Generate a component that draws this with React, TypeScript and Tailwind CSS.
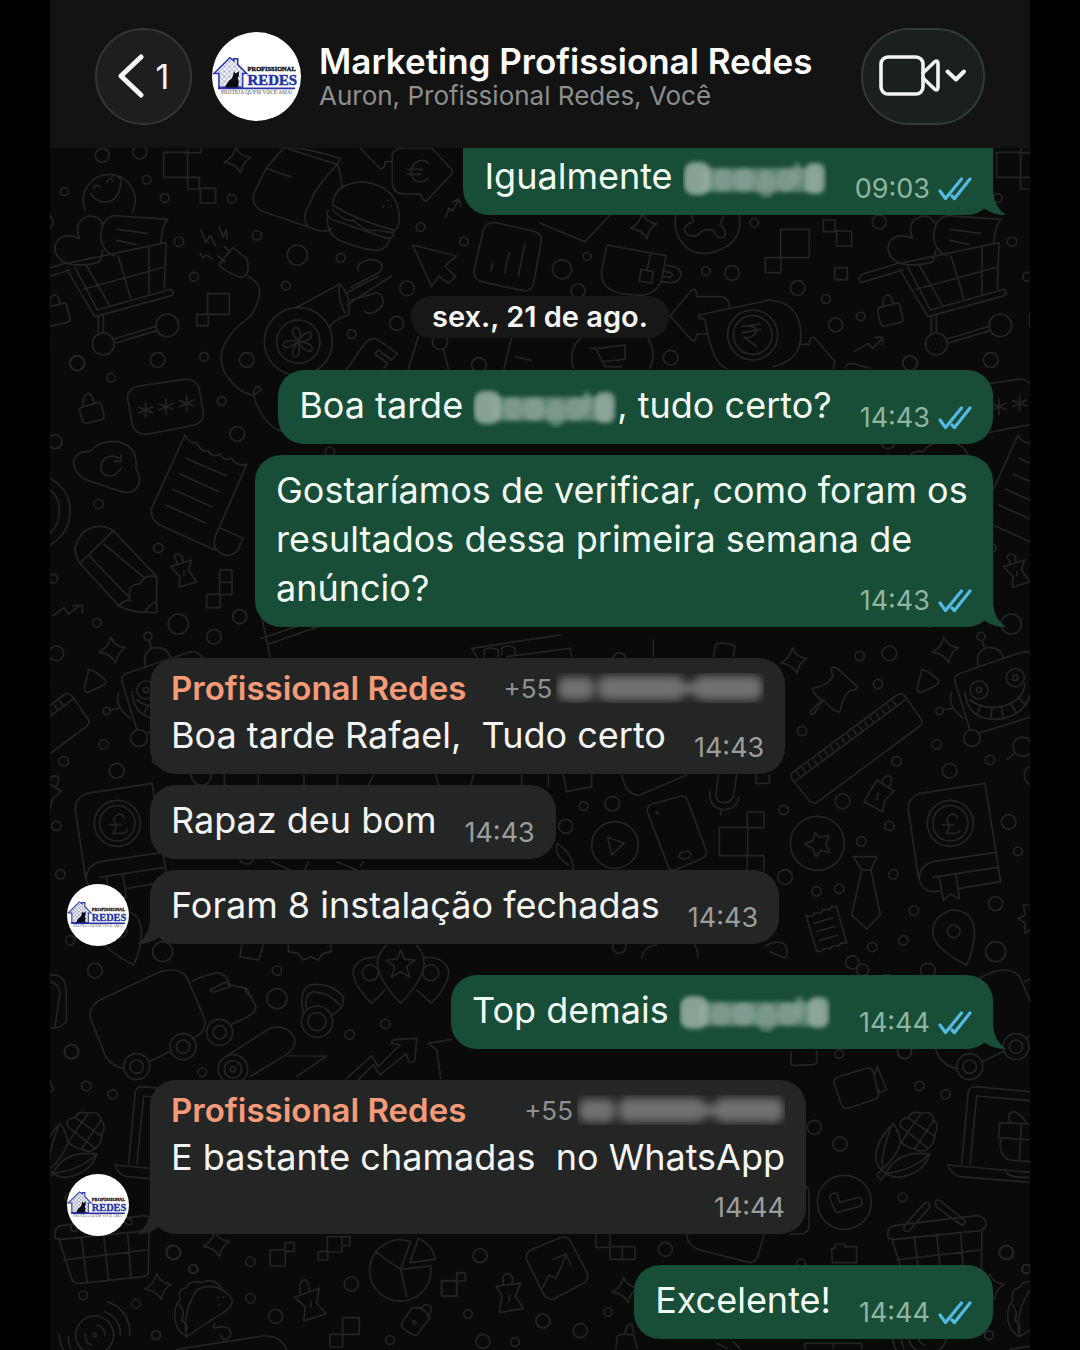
import type { ReactNode } from "react";

type Circle = [number, number, number];

type Message = {
  id: number;
  own?: boolean;
  sender?: boolean;
  body: ReactNode;
  time: string;
  timePlace?: "inline" | "below" | "corner";
  tail?: boolean;
  cut?: boolean;
  gap: string;
};

// Each doodle zone is drawn on its own 3x grid and placed on the wallpaper.
const zones: { at: string; circles: Circle[]; sparkles: [number, number][]; path: string }[] = [
  {
    at: "translate(50 130) scale(.3333)",
    circles: [
      [157, 76, 21], [269, 66, 21], [290, 149, 13], [43, 185, 12], [344, 204, 13], [545, 206, 13], [387, 335, 14],
      [621, 316, 14], [742, 375, 30], [872, 383, 13], [432, 440, 13], [708, 467, 13], [1071, 475, 22], [1040, 580, 21],
      [905, 612, 13], [1112, 291, 13], [1242, 335, 13], [82, 700, 22], [323, 690, 22], [183, 743, 13], [462, 680, 13],
      [590, 690, 22], [515, 813, 13], [562, 912, 22], [15, 935, 21], [160, 642, 33], [352, 586, 34], [745, 635, 102],
      [745, 635, 65], [1170, 635, 23], [1287, 705, 22],
    ],
    sparkles: [[563, 90]],
    path: "M341 67h72v75h-72zM413 53v15h40v-15M413 142h35v35h-35zM451 175h46v44h-46zM105 240A78 78 0 1 1 248 245M122 190Q140 222 180 214Q215 200 212 140M130 178q8-22 20-5M170 158q8-22 20-5M185 140q10-12 28 8M55 402Q5 380 18 340Q35 305 88 325Q68 270 120 258Q150 258 158 285M158 362L150 395Q110 410 55 402M192 257L353 268Q335 290 333 338M192 257Q155 265 152 320Q155 365 195 378M200 298l93 12M200 331l58 12M45 400L-60 432Q-80 445-66 458L60 420M50 400L348 338L343 475M50 418L135 560L365 497Q375 485 362 478L142 540L75 412M110 408L178 525M205 380L242 505M297 352V490M100 478L340 412M145 560V608M160 555V607M190 628L320 588M194 640L322 602M-10 532L40 520Q48 518 50 526L60 565Q62 575 52 577L5 588Q-5 588-8 580L-16 545Q-16 535-10 532zM0 528v-18Q5 495 15 495Q26 498 30 520M95 832L145 818Q152 816 154 824L162 858Q162 866 154 869L108 880Q100 880 98 872L88 842Q88 834 95 832zM100 830v-22Q106 790 115 790Q128 792 132 820M232 800Q235 775 265 768L405 748Q438 745 447 775L460 845Q463 875 435 885L295 912Q255 915 247 885zM287 818v44M266 832l42 16M308 830l-42 20M348 808v44M327 822l42 16M369 820l-42 20M410 798v44M389 812l42 16M431 810l-42 20M700 55L648 115L612 190Q602 225 635 243L800 300Q830 308 845 295M648 115l72 25M700 55Q740 45 870 85L862 103L715 57M862 103Q876 140 876 175M862 103Q790 180 785 210Q750 265 775 290M848 225Q850 160 940 155Q1050 170 1048 270Q1045 300 1030 300Q930 275 848 225zM835 240Q825 260 850 270L1010 325Q1035 325 1030 305M848 240Q890 280 910 270Q950 310 975 300L1030 308M832 262Q830 320 880 335Q960 365 990 360Q1015 350 1020 325M998 230h3M1012 211h3M1022 228h3M1027 95V75Q1032 55 1060 54H1145L1205 118Q1210 125 1205 132L1130 212Q1118 215 1112 192H1060Q1030 190 1027 160V95H1005Q1005 118 990 116L930 53M1135 100Q1125 88 1110 92Q1085 100 1083 125Q1085 155 1110 155Q1125 155 1135 145M1073 118h45M1073 133h40M1187 262l10-27 10 8 18-32M1207 217l20-10 6 22M507 405L548 353L590 385Q605 440 570 442Q525 425 507 405zM505 378l20 18M523 350l18 18M595 440Q660 470 600 560Q490 640 520 720Q560 790 610 795Q650 775 620 770Q595 790 640 860Q670 900 700 905M453 300l15 38 12-22 17 32M508 292l12 30 8-24 4 30M450 370l10 14 8-10 18 12M473 491h65v62h-65zM440 553h35v34h-35zM1088 345L1220 378L1185 408L1217 440L1195 460L1167 438L1145 470zM1300 300Q1308 275 1335 278L1450 303Q1480 310 1473 340L1450 465Q1442 485 1420 482L1295 455Q1268 445 1273 420zM1328 400l-5 22M1377 368l-13 60M1425 340l-20 98M735 535L870 462M840 590Q850 570 895 555Q905 500 870 462Q860 500 885 550M888 490L985 438M890 525L1025 438M925 422Q915 395 965 388Q1010 395 990 425L905 472M905 510L980 488Q1005 495 997 525Q975 560 943 545M745 635Q715 600 738 592Q760 600 745 635Q770 595 785 612Q785 635 745 635Q795 640 785 662Q765 670 745 635Q755 680 735 680Q715 670 745 635Q705 665 700 645Q705 625 745 635M890 718L945 640Q965 618 985 630L1042 670L1025 690L985 660L975 672L1012 700L1002 715M1105 620L1075 718M1180 655l15 62M1385 620L1362 718M1395 680l50 12",
  },
  {
    at: "translate(540 200) scale(.3333)",
    circles: [
      [66, 208, 29], [141, 169, 12], [114, 273, 21], [498, 213, 13], [576, 219, 22], [643, 68, 13], [773, 264, 22],
      [858, 297, 13], [887, 375, 21], [962, 349, 13], [1018, 66, 21], [392, 473, 22], [1110, 489, 22], [638, 405, 75],
      [638, 405, 58],
    ],
    sparkles: [[312, 78]],
    path: "M722 88h86v85h-86zM676 173h47v45h-47zM850 60h36v35h-36zM890 93h45v45h-45zM884 203h38v36h-38zM0 70L135 125L210 45M408 45Q395 110 450 150Q490 170 540 150Q610 120 598 45M455 45L460 65Q430 75 435 95Q445 115 475 105Q485 85 520 90Q530 120 555 110Q560 85 540 75L550 50M200 135L378 167L365 240Q345 290 290 285Q180 285 185 215zM332 160L322 208M303 208L340 215L335 250L298 243zM375 195L400 200Q425 205 422 228Q415 255 368 245M372 213L392 218Q405 225 390 232L370 230M390 348L455 270Q470 262 470 290H545Q568 295 568 322M390 348L455 420Q468 428 470 402H500M477 345Q472 355 495 358Q515 490 560 505M477 345L690 300Q780 310 783 400Q785 480 700 500M780 433H808Q810 405 825 415L885 485L880 505M605 380l55-8M607 398l55-10M625 378Q655 380 648 400Q635 415 612 412L650 440M100 505Q85 450 120 415M325 415Q350 460 330 505M148 445H168L195 500H245M175 445L255 435V478L185 485M943 455L985 430L998 445L1025 418M1005 412H1028V435M915 505Q920 485 945 492L990 505",
  },
  {
    at: "translate(50 430) scale(.3333)",
    circles: [[146, 222, 14], [325, 354, 14], [385, 582, 30], [492, 620, 22], [569, 560, 21], [141, 578, 13], [10, 446, 13], [840, 65, 14]],
    sparkles: [],
    path: "M0 145Q60 180 60 240Q60 310 0 345M0 180Q28 200 28 240Q28 285 0 310M100 145Q65 120 72 90Q85 60 120 65Q145 30 205 35Q265 50 258 115Q280 155 255 180Q235 195 200 180Q120 155 100 145zM212 88Q190 70 165 85Q140 115 165 135Q195 145 213 115M212 76v18h-18M405 15L305 235Q300 270 330 285L495 360M405 15Q415 40 440 38Q455 70 475 62Q485 85 510 72Q520 95 545 85Q560 110 590 103L500 310Q485 340 500 360Q530 390 560 365L580 325L512 295M408 85l120 52M390 132l117 53M368 178l118 52M347 225l118 53M75 355Q85 310 120 295Q160 280 190 302L320 440V548L260 545Q225 540 205 525L90 400Q75 380 75 355zM90 400L190 302M120 380L235 500M162 342L285 445M205 530Q225 505 240 512Q230 460 270 462Q285 430 318 440M285 545Q300 520 318 518M362 410L395 400L425 390L415 420L440 455L388 472L390 440zM380 400V392Q365 380 380 372Q402 372 398 398M402 425v12M509 420h37v37h-37zM509 457h37v37h-37zM470 493h40v40h-40zM10 557L42 533L55 552L90 527M70 527H97V550M635 560L660 680M635 625L770 580M655 643L890 560",
  },
  {
    at: "translate(770 620) scale(.3333)",
    circles: [
      [269, 108, 14], [358, 100, 22], [324, 192, 14], [96, 333, 14], [380, 424, 14], [500, 373, 14], [539, 452, 22],
      [660, 420, 14], [41, 570, 14], [218, 544, 22], [358, 618, 14], [274, 664, 14], [716, 606, 22], [744, 694, 13],
      [45, 771, 22], [370, 763, 14], [139, 814, 14], [208, 806, 14], [432, 872, 14], [677, 851, 21], [400, 961, 14],
      [307, 981, 14], [677, 995, 30], [474, 1052, 22], [606, 354, 25], [758, 380, 29], [633, 49, 12], [509, 273, 11],
      [627, 210, 27], [627, 210, 8], [736, 173, 27], [736, 173, 8], [142, 670, 81], [541, 610, 69], [541, 610, 53],
      [551, 934, 19], [247, 1027, 20], [278, 1050, 18],
    ],
    sparkles: [[72, 122], [527, 90]],
    path: "M183 145Q195 138 205 148L262 200Q258 212 240 212Q218 230 210 275Q195 280 160 240L130 283Q115 285 125 270L155 240Q130 225 128 205Q170 200 188 170zM455 150Q470 148 505 180Q510 190 500 195L455 217Q440 217 442 205zM62 462L385 222Q395 218 405 228L455 300Q458 310 450 318L140 548Q128 553 118 543L65 475zM78 482L408 238M80 455l8 12M97 443l8 12M114 430l8 12M131 418l8 12M148 405l8 12M165 393l8 12M182 380l8 12M199 368l8 12M216 355l8 12M233 343l8 12M250 330l8 12M267 318l8 12M284 305l8 12M301 293l8 12M318 280l8 12M335 268l8 12M352 255l8 12M369 243l8 12M625 137Q615 95 650 83Q695 80 700 115M643 83L636 60M555 185Q550 170 570 160L760 95Q790 95 800 120L850 270M555 185L600 330M632 338L800 285M545 218Q530 260 580 295M545 265L520 270M585 215Q590 300 680 298Q780 290 790 180M600 240Q630 265 680 262Q760 250 765 190M622 280l12-26M662 296l4-32M700 296l-6-34M740 280l-16-28M768 255l-22-22M735 397L712 418M282 545L320 480L372 513L345 540L338 575zM335 485Q345 462 362 470Q370 485 355 503M325 520l-5 18M135 637L150 652L178 645L168 672L178 697L152 692L138 710L128 685L103 672L128 662zM250 710H321L303 750H275zM275 750L245 885L290 927L331 885L303 750M108 887l18 2 8-10 18 0 8-10 18 0 8-10 14 1L230 970l-16-2-8 10-18 0-8 8-18 0-8 8-14 0zM132 910l55-16M140 935l55-16M148 962l55-16M645 490L450 520Q412 535 415 570L445 770Q455 815 490 815L510 813M645 490L692 785L568 805M448 775Q450 735 490 725L678 697M488 772L683 742M508 770L520 842L540 822L568 835L558 765M562 595Q558 580 545 583Q525 590 535 610Q540 630 528 640H550Q565 642 570 630M518 614h35M490 950Q480 890 545 870Q610 870 614 935Q612 990 590 1035Q500 990 490 950zM780 855h-20l5 30-20 10 20 15v30l15-10",
  },
  {
    at: "translate(50 760) scale(.3333)",
    circles: [
      [65, 875, 21], [681, 632, 14], [681, 716, 30], [899, 824, 14], [1006, 792, 14], [457, 937, 13], [454, 46, 30],
      [590, 290, 22], [260, 920, 39], [260, 920, 20], [399, 860, 39], [399, 860, 20], [509, 817, 39], [509, 817, 20],
      [961, 638, 24], [1142, 638, 24], [801, 785, 47], [801, 785, 27], [549, 928, 44], [549, 928, 26], [549, 928, 8],
    ],
    sparkles: [],
    path: "M120 770Q118 745 145 722L330 635Q385 620 410 650L465 780Q470 815 430 835M120 770L165 885Q185 920 220 925M298 905L365 872M425 665Q450 650 500 638Q530 640 540 675L590 685L618 740Q620 765 545 792M480 690L530 665L540 680L490 697zM585 688Q590 708 605 708M0 645Q45 640 48 690L50 780Q40 805 0 805M0 665Q25 670 30 700L15 800M965 730Q905 670 910 630Q925 590 980 592M1052 730Q985 660 982 610Q985 575 1010 556M1052 730Q1120 660 1123 610Q1120 575 1100 556M1145 730Q1200 670 1196 630Q1180 590 1125 592M1145 730L1100 690M965 730L1005 690M1052 570L1063 598L1096 600L1070 620L1080 652L1052 635L1025 652L1034 620L1008 600L1041 598zM760 760Q745 690 780 675Q840 665 880 710Q885 745 845 765M770 745Q760 705 790 695Q840 700 870 735M530 888L660 805Q710 790 735 835Q740 865 700 890L600 950M712 888H830L740 950M523 45V76M625 45V76M762 45V76M862 45V76M970 45L955 76M1158 45l8 31M890 955L965 888L985 920L1050 855L1025 850Q1025 838 1040 838L1100 835L1095 900Q1075 920 1070 880L990 945L970 915L925 958M1135 850L1205 838M1135 850L1160 870L1172 955M575 555L570 590L625 600L640 555M715 555V575L745 580L760 600L780 590L805 600L820 580L843 575V555M665 305l55 25M775 305l-10 25M860 305l60 25M930 320l10-15",
  },
  {
    at: "translate(50 1060) scale(.3333)",
    circles: [
      [109, 78, 14], [188, 103, 14], [371, 578, 21], [431, 627, 13], [601, 605, 14], [601, 715, 14], [677, 769, 21],
      [904, 672, 21], [1020, 840, 13], [99, 706, 13], [258, 731, 13], [318, 826, 13], [134, 825, 57], [134, 825, 5],
      [1093, 787, 5],
    ],
    sparkles: [[500, 552], [325, 680]],
    path: "M172 725Q240 750 240 825M165 755Q210 775 212 825M28 823Q28 850 40 870M55 830Q55 850 62 865M105 820Q105 850 125 855M140 795Q165 800 165 825M660 570h46v48h-46zM705 548h28v26h-28zM832 530h44v46h-44zM805 574h28v26h-28zM876 530h24v26h-24zM878 773h50v50h-50zM840 823h38v38h-38zM1175 662h46v46h-46zM410 830Q395 760 440 690Q500 660 545 715Q555 740 500 770zM410 830Q380 815 375 780Q370 740 390 720Q380 690 410 682Q420 658 455 668Q490 650 515 685M388 735Q408 760 395 780Q415 795 410 812M503 713h3M518 712h3M508 733h3M495 790Q480 810 510 800Q550 800 540 830Q520 850 512 825M735 712L808 685L800 730L828 762L762 782L765 740zM750 700V675Q755 655 770 662Q780 675 778 692M783 725v16M1082 545A92 92 0 1 0 1142 618L1052 628zM1052 628L975 575M1052 628L1070 710M1105 535L1080 608L1155 598Q1150 555 1105 535zM1055 790L1085 745Q1120 735 1140 775L1100 825Q1085 830 1055 800zM1115 745Q1125 725 1143 740Q1145 760 1130 770M380 868L640 828Q690 825 710 868",
  },
  {
    at: "translate(440 1180) scale(.3333)",
    circles: [
      [120, 227, 21], [676, 208, 21], [309, 423, 21], [421, 452, 21], [129, 484, 21], [84, 402, 13], [225, 486, 13],
      [504, 396, 13], [1388, 52, 13], [1698, 217, 21], [1083, 250, 13], [1758, 267, 13], [1647, 465, 13],
    ],
    sparkles: [[556, 330]],
    path: "M260 240Q255 220 272 210L365 172Q382 168 392 185L442 280Q448 298 430 310L345 355Q325 362 312 345zM307 325L327 285L348 295L378 225M340 238L378 222L393 255M468 165V202H510V238H585V200H510V165M547 200V238M5 303H50V348H5zM50 278H76V303H50zM169 318L242 310L226 350L250 385L178 398L186 350zM190 312V290Q203 270 217 290V310M208 345v20M740 165Q745 200 780 210L930 248Q948 245 953 230L972 165M1175 205H1185V192H1213V200H1250V248H1177zM528 505L532 470Q540 458 580 465L592 505M555 458Q560 430 575 432L582 460M1095 505V490H1265V505M1180 490V505M830 490L860 505M880 485L900 505",
  },
  {
    at: "translate(440 640) scale(.3333)",
    circles: [[431, 498, 13], [517, 491, 22], [377, 559, 21], [538, 58, 20], [525, 615, 70], [651, 518, 3], [538, 920, 20]],
    sparkles: [],
    path: "M503 592L552 610L515 645zM622 515Q620 500 635 492L725 468Q738 468 742 480L798 630Q802 648 788 655L705 690Q690 692 685 680zM717 650Q720 632 745 634Q760 642 745 654Q725 662 717 650M835 405L828 465Q830 490 855 488Q880 485 882 460L890 405M810 453Q805 505 850 508Q890 510 897 470M843 510v15M838 562h85v85h-85zM922 516h50v47h-50zM922 647h50v45M922 647v45M948 405v25h40v-25M370 405L380 455L455 440V405M545 405Q560 470 600 465L740 405M245 405V437M325 405V440M100 405L92 437M350 610Q400 640 400 690M350 615Q345 650 385 675M95 25L110 50M200 50L390 25L395 50M95 25L360-15M640 0V50M820 50L828 12Q850 5 885 18L880 50M605 955Q615 915 650 915M765 915Q775 935 775 955M975 920Q1000 900 1030 910Q1050 930 1035 955L990 935M133 50V30Q150 18 175 30V50M185 45V25Q205 10 225 25V45",
  },
  {
    at: "translate(780 960) scale(.3333)",
    circles: [[103, 502, 21], [180, 552, 21], [178, 282, 13], [373, 275, 21], [193, 727, 81]],
    sparkles: [],
    path: "M162 370Q160 358 172 352L260 325Q275 322 280 335L295 400Q297 412 285 418L205 445Q190 447 185 435zM285 340L292 320L320 390L300 398L292 385M340 490Q290 540 287 590Q290 620 305 630Q350 590 362 550Q360 520 340 490zM335 495Q300 590 308 625M318 640Q350 570 450 582Q430 640 360 652Q330 652 318 640L302 660L290 645L305 630zM320 640Q400 630 445 585M362 500Q355 475 385 473Q395 450 425 460Q455 450 462 480Q480 500 465 520Q465 550 445 565Q430 580 405 568Q375 560 362 545M362 500L445 565M385 473L465 530M425 460L395 500L365 545M462 480L405 565M150 715Q145 705 160 700L170 700L180 728L235 712Q245 712 246 728Q245 738 235 740L175 757Q165 757 162 745zM545 610L565 395Q570 380 585 380L750 395M570 612L590 408L750 422M503 615L750 637M503 615Q515 645 540 650L750 667M678 635Q685 650 720 652L750 652M660 488L750 492M660 488L655 533L750 540M662 535Q655 590 690 600L750 605M725 490L718 600M690 485Q680 455 705 455Q725 465 740 490M325 835Q318 805 340 797L590 767Q620 770 618 795Q615 808 600 812L345 838Q330 838 325 835zM335 835L375 960Q385 975 400 970L590 950Q605 948 604 935L606 812M403 830L420 965M470 825L485 960M542 818L552 955M350 900L600 870M375 795Q365 815 385 815L450 740Q450 725 435 728zM470 720Q460 735 475 745L545 795Q560 795 553 780L480 722zM33 275V310Q35 318 45 316L100 314Q112 312 110 300V275M65 675Q85 675 87 695V800Q85 822 60 822H30",
  },
];

const Wallpaper = () => (
  <svg
    aria-hidden="true"
    className="absolute inset-0 h-full w-full text-[#232424]"
    viewBox="50 148 980 1202"
    preserveAspectRatio="xMidYMin slice"
    fill="none"
    stroke="currentColor"
    strokeWidth="5"
    strokeLinejoin="round"
    strokeLinecap="round"
  >
    <defs>
      <g id="doodles">
        {zones.map((zone) => (
          <g key={zone.at} transform={zone.at}>
            {zone.circles.map(([cx, cy, r]) => (
              <circle key={`${cx}-${cy}-${r}`} cx={cx} cy={cy} r={r} />
            ))}
            {zone.sparkles.map(([x, y]) => (
              <path
                key={`${x}-${y}`}
                transform={`translate(${x} ${y})`}
                d="M-5-38Q6-10 39-7Q14 6 9 38Q-6 10-40 7Q-14-6-5-38z"
              />
            ))}
            <path d={zone.path} />
          </g>
        ))}
      </g>
    </defs>
    {/* the pattern repeats every 833 units */}
    <use href="#doodles" x="-833" />
    <use href="#doodles" />
    <use href="#doodles" x="833" />
  </svg>
);

const Logo = ({ className }: { className: string }) => (
  <svg viewBox="0 0 90 90" className={`shrink-0 rounded-full bg-white ${className}`} role="img" aria-label="Profissional Redes">
    <defs>
      <pattern id="net" width="5" height="5" patternUnits="userSpaceOnUse">
        <path d="M0 2.5L2.5 0L5 2.5L2.5 5z" fill="none" stroke="#5b669c" strokeWidth=".7" />
      </pattern>
    </defs>
    <path d="M2 42L18 26L22 29V27H26V33L35 42H31V56H7V42z" fill="url(#net)" stroke="#2b3aa8" strokeWidth="1.6" />
    <path d="M13 57Q15 50 20 47Q22 43 22 40L24 42L27 40Q28 44 26 46Q28 51 26 57z" fill="#0b0b12" />
    <path d="M6 57H84" stroke="#2432a5" strokeWidth="2" />
    <text x="36" y="39" fontFamily="Liberation Serif, serif" fontWeight="700" fontSize="6.5" fill="#15151c" stroke="#15151c" strokeWidth=".4">
      PROFISSIONAL
    </text>
    <text x="36" y="54" fontFamily="Liberation Serif, serif" fontWeight="700" fontSize="15" fill="#2432a5" stroke="#2432a5" strokeWidth=".5">
      REDES
    </text>
    <text x="9" y="63" fontFamily="Liberation Serif, serif" fontSize="5.5" fill="#55565e">
      PROTEJA QUEM VOCÊ AMA!
    </text>
  </svg>
);

// Smudged-out name
const HiddenName = ({ wide }: { wide?: boolean }) => (
  <svg
    aria-hidden="true"
    viewBox="0 0 144 40"
    preserveAspectRatio="none"
    className={`inline-block h-10 align-middle ${wide ? "w-[152px]" : "w-36"}`}
  >
    <g className="blur-[2px]" fill="#93aca0">
      <rect x="1" y="3" width="27" height="33" rx="10" opacity=".9" />
      <rect x="18" y="9" width="120" height="24" rx="8" opacity=".6" />
      <ellipse cx="40" cy="21" rx="10" ry="12" opacity=".5" />
      <ellipse cx="61" cy="21" rx="11" ry="12" opacity=".6" />
      <ellipse cx="83" cy="25" rx="10" ry="14" opacity=".5" />
      <ellipse cx="103" cy="21" rx="10" ry="12" opacity=".5" />
      <ellipse cx="114" cy="15" rx="5" ry="12" opacity=".5" />
      <rect x="122" y="4" width="20" height="31" rx="8" opacity=".85" />
    </g>
  </svg>
);

const HiddenPhone = () => (
  <svg aria-hidden="true" viewBox="0 0 208 30" className="h-[30px] w-52">
    <g className="blur-[4px]" fill="#6f7070">
      <rect x="2" y="4" width="36" height="23" rx="8" />
      <rect x="42" y="3" width="86" height="24" rx="8" />
      <rect x="120" y="10" width="24" height="11" rx="4" />
      <rect x="138" y="3" width="68" height="24" rx="8" />
    </g>
  </svg>
);

const Checks = () => (
  <svg aria-label="Lida" role="img" viewBox="0 0 34 24" className="h-6 w-[34px]" fill="none" stroke="#56b9e4" strokeWidth="3.200" strokeLinecap="round" strokeLinejoin="round">
    <path d="M2 14L7.500 21.500L23.500 2M14 19L16.500 21.500L32 2" />
  </svg>
);

const Tail = ({ own }: { own?: boolean }) =>
  own ? (
    <svg aria-hidden="true" viewBox="0 0 34 30" className="absolute -right-[13px] bottom-0 h-[30px] w-[34px]">
      <path d="M21 0V6Q22 22 34 30Q22 30 13 24L0 10z" fill="#184d37" />
    </svg>
  ) : (
    <svg aria-hidden="true" viewBox="0 0 34 30" className="absolute -left-[13px] bottom-0 h-[30px] w-[34px]">
      <path d="M13 0V6Q12 22 0 30Q12 30 21 24L34 10z" fill="#242626" />
    </svg>
  );

const messages: Message[] = [
  { id: 2, own: true, body: <>Boa tarde <HiddenName />, tudo certo?</>, time: "14:43", gap: "mt-8" },
  {
    id: 3,
    own: true,
    body: "Gostaríamos de verificar, como foram os resultados dessa primeira semana de anúncio?",
    time: "14:43",
    timePlace: "corner",
    tail: true,
    gap: "mt-[11px]",
  },
  { id: 4, sender: true, body: "Boa tarde Rafael,  Tudo certo", time: "14:43", gap: "mt-[31px]" },
  { id: 5, body: "Rapaz deu bom", time: "14:43", gap: "mt-[11px]" },
  { id: 6, body: "Foram 8 instalação fechadas", time: "14:43", tail: true, gap: "mt-[11px]" },
  { id: 7, own: true, body: <>Top demais <HiddenName wide /></>, time: "14:44", tail: true, gap: "mt-[31px]" },
  { id: 8, sender: true, body: "E bastante chamadas  no WhatsApp", time: "14:44", timePlace: "below", tail: true, gap: "mt-[31px]" },
  { id: 9, own: true, body: "Excelente!", time: "14:44", gap: "mt-[31px]" },
];

const placement = {
  inline: { row: "flex items-end justify-between gap-[28px]", time: "-mb-1" },
  below: { row: "flex flex-col", time: "mt-[10px] -mb-1 self-end" },
  corner: { row: "", time: "float-right mt-[21px] -mb-1" },
};

const Bubble = ({ own, sender, body, time, timePlace = "inline", tail, cut, gap }: Message) => {
  const place = placement[timePlace];
  const stamp = (
    <span
      className={`flex shrink-0 items-center gap-2 text-[27px] leading-8 ${place.time} ${own ? "text-[#8fb5a2]" : "text-[#9c9d9d]"}`}
    >
      <time>{time}</time>
      {own && <Checks />}
    </span>
  );

  return (
    <li className={`flex items-end ${gap} ${own ? "justify-end pr-[37px]" : "gap-[21px] pl-[17px]"}`}>
      {!own && <div className="-mb-0.5 w-[62px] shrink-0">{tail && <Logo className="h-[62px] w-[62px]" />}</div>}
      <div
        className={`relative max-w-[738px] px-[21px] pb-[14px] ${own ? "bg-[#184d37] text-[#f1faf4]" : "bg-[#242626] text-[#f4f4f4]"} ${
          cut ? "rounded-b-[26px] pt-1" : "rounded-[26px] pt-[11px]"
        }`}
      >
        {tail && <Tail own={own} />}
        {sender && (
          <div className="flex h-[42px] items-center justify-between gap-8 pb-1">
            <span className="text-[33px] leading-[38px] font-semibold text-[#f59b79]">Profissional Redes</span>
            <span className="flex items-center gap-1 text-[26px] text-[#8f9090]">
              +55 <HiddenPhone />
            </span>
          </div>
        )}
        <div className={place.row}>
          <p className="text-[36px] leading-[49px] whitespace-pre-wrap">
            {body}
            {timePlace === "corner" && stamp}
          </p>
          {timePlace !== "corner" && stamp}
        </div>
      </div>
    </li>
  );
};

const App = () => (
  <div className="min-h-screen bg-black px-[50px] font-['Inter',sans-serif]">
    <header className="flex h-[148px] items-center bg-[#121312] px-[45px] pt-1">
      <button
        aria-label="Voltar, 1 não lida"
        className="flex h-[97px] w-[97px] shrink-0 items-center justify-center gap-3 rounded-full border-2 border-[#353535] bg-[#1e1e1e] text-[34px] text-[#f5f5f5]"
      >
        <svg aria-hidden="true" viewBox="0 0 26 44" className="h-11 w-[26px]" fill="none" stroke="currentColor" strokeWidth="5" strokeLinecap="round" strokeLinejoin="round">
          <path d="M23 3L3 22L23 41" />
        </svg>
        1
      </button>
      <Logo className="ml-5 h-[89px] w-[89px]" />
      <div className="ml-[18px] min-w-0 flex-1 pt-1">
        <h1 className="text-[35px] leading-9 font-semibold whitespace-nowrap text-white">Marketing Profissional Redes</h1>
        <p className="text-[26px] leading-[34px] text-[#8d8e8e]">Auron, Profissional Redes, Você</p>
      </div>
      <button
        aria-label="Chamada de vídeo"
        className="flex h-[97px] w-[124px] shrink-0 items-center justify-center rounded-full border-2 border-[#343a38] bg-[#1a201e] text-[#f1f4f3]"
      >
        <svg aria-hidden="true" viewBox="0 0 88 42" className="h-[42px] w-[88px]" fill="none" stroke="currentColor" strokeWidth="3.600" strokeLinecap="round" strokeLinejoin="round">
          <rect x="2" y="2" width="42" height="37" rx="7" />
          <path d="M44 18L56 6.500Q59 5 59 9V32Q59 36 56 34.500L44 23" />
          <path d="M68.500 16.500L77 24.500L85 16.500" strokeWidth="4" />
        </svg>
      </button>
    </header>
    <main className="relative overflow-hidden bg-[#0a0a0a] pb-[11px]">
      <Wallpaper />
      <ul className="relative">
        <Bubble id={1} own cut tail gap="" time="09:03" body={<>Igualmente <HiddenName /></>} />
        <li className="mt-[81px] flex justify-center">
          <h2 className="rounded-[20px] bg-[#171717] px-[21px] text-[29px] leading-[42px] font-semibold text-[#f5f5f5]">sex., 21 de ago.</h2>
        </li>
        {messages.map((message) => (
          <Bubble key={message.id} {...message} />
        ))}
      </ul>
    </main>
  </div>
);

export default App;
